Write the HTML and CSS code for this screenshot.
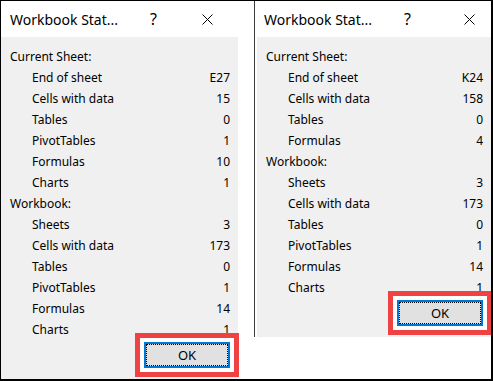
FILE: index.html
```html
<!DOCTYPE html>
<html lang="en">
<head>
  <meta charset="UTF-8">
  <title>Workbook Statistics</title>
  <link rel="stylesheet" href="styles.css">
</head>
<body>

  <div class="frame">

    <div class="dialog dialog-left">
      <div class="titlebar">
        <span class="title">Workbook Stat...</span>
        <span class="help">?</span>
        <svg class="close" width="11" height="11" viewBox="0 0 11 11">
          <path d="M0.5 0.5 L10.5 10.5 M10.5 0.5 L0.5 10.5" stroke="#000" stroke-width="1"/>
        </svg>
      </div>
      <div class="body">
        <div class="section">Current Sheet:</div>
        <div class="row"><span>End of sheet</span><span>E27</span></div>
        <div class="row"><span>Cells with data</span><span>15</span></div>
        <div class="row"><span>Tables</span><span>0</span></div>
        <div class="row"><span>PivotTables</span><span>1</span></div>
        <div class="row"><span>Formulas</span><span>10</span></div>
        <div class="row"><span>Charts</span><span>1</span></div>
        <div class="section">Workbook:</div>
        <div class="row"><span>Sheets</span><span>3</span></div>
        <div class="row"><span>Cells with data</span><span>173</span></div>
        <div class="row"><span>Tables</span><span>0</span></div>
        <div class="row"><span>PivotTables</span><span>1</span></div>
        <div class="row"><span>Formulas</span><span>14</span></div>
        <div class="row"><span>Charts</span><span>1</span></div>
        <div class="buttons">
          <button class="ok">OK</button>
        </div>
      </div>
    </div>

    <div class="dialog dialog-right">
      <div class="titlebar">
        <span class="title">Workbook Stat...</span>
        <span class="help">?</span>
        <svg class="close" width="11" height="11" viewBox="0 0 11 11">
          <path d="M0.5 0.5 L10.5 10.5 M10.5 0.5 L0.5 10.5" stroke="#000" stroke-width="1"/>
        </svg>
      </div>
      <div class="body">
        <div class="section">Current Sheet:</div>
        <div class="row"><span>End of sheet</span><span>K24</span></div>
        <div class="row"><span>Cells with data</span><span>158</span></div>
        <div class="row"><span>Tables</span><span>0</span></div>
        <div class="row"><span>Formulas</span><span>4</span></div>
        <div class="section">Workbook:</div>
        <div class="row"><span>Sheets</span><span>3</span></div>
        <div class="row"><span>Cells with data</span><span>173</span></div>
        <div class="row"><span>Tables</span><span>0</span></div>
        <div class="row"><span>PivotTables</span><span>1</span></div>
        <div class="row"><span>Formulas</span><span>14</span></div>
        <div class="row"><span>Charts</span><span>1</span></div>
        <div class="buttons">
          <button class="ok">OK</button>
        </div>
      </div>
    </div>

  </div>

</body>
</html>
```

FILE: styles.css
```css
body {
  margin: 0;
  font-family: "Noto Sans", "Open Sans", sans-serif;
  color: #000;
  background: #fff;
}

.frame {
  width: 493px;
  height: 381px;
  box-sizing: border-box;
  border: 1px solid #000;
  border-right-width: 2px;
  border-bottom-width: 2px;
  display: flex;
  align-items: stretch;
  overflow: hidden;
}

.dialog {
  display: flex;
  flex-direction: column;
}

.dialog-left {
  width: 237px;
}

.dialog-right {
  flex: 1;
  margin-left: 16px;
  align-self: flex-start;
  border-left: 1px solid #3c3c3c;
  padding-left: 2px;
}

.titlebar {
  height: 36px;
  display: flex;
  align-items: center;
  font-size: 15px;
  background: #fff;
}

.title {
  width: 140px;
  padding-left: 9px;
  font-size: 14px;
  white-space: nowrap;
}

.dialog-right .title {
  padding-left: 7px;
}

.help {
  width: 52px;
  font-size: 16px;
}

.close {
  display: block;
}

.dialog-right .close {
  margin-left: 8px;
}

.body {
  flex: 1;
  background: #f0f0f0;
  padding: 9px 8px 11px 0;
  font-size: 12px;
}

.section {
  height: 21px;
  line-height: 21px;
  padding-left: 9px;
}

.row {
  height: 21px;
  line-height: 21px;
  display: flex;
  justify-content: space-between;
  padding-left: 31px;
}

.buttons {
  display: flex;
  justify-content: flex-end;
  margin-top: 2px;
}

.ok {
  width: 86px;
  height: 26px;
  box-sizing: border-box;
  margin: 0;
  padding: 0;
  font-family: inherit;
  font-size: 13px;
  color: #000;
  background: #e1e1e1;
  border: 2px solid #0078d7;
  outline: 1px dotted #000;
  outline-offset: -3px;
  box-shadow: 0 0 0 4px #fff, 0 0 0 9px #ef4343;
}
```
